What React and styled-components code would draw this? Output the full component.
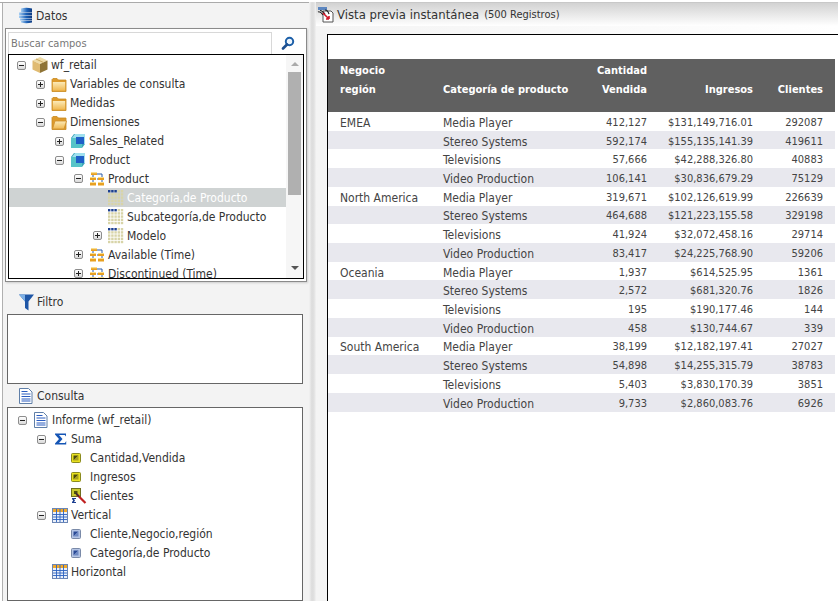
import React from 'react';
import styled, { createGlobalStyle } from 'styled-components';

const GlobalStyle = createGlobalStyle`
  html, body { margin: 0; padding: 0; background: #fff; }
  body { font-family: "DejaVu Sans Condensed", "DejaVu Sans", "Noto Sans", sans-serif; font-stretch: condensed; font-size: 12px; color: #333; }
`;

const Page = styled.div`
  width: 838px;
  height: 601px;
  display: flex;
  overflow: hidden;
  background: #fff;
`;

const LeftPane = styled.div`
  width: 309px;
  height: 601px;
  box-sizing: border-box;
  padding: 0 0 0 5px;
  margin-top: 2px;
  background: #f3f3f3;
  border-top: 1px solid #aaa;
  box-shadow: inset 2px 0 0 #fff, inset 3px 0 0 #b0b0b0;
  display: flex;
  flex-direction: column;
`;

const Splitter = styled.div`
  width: 7px;
  margin-top: 2px;
  background: linear-gradient(to right, #f3f3f3, #dcdcdc 40%, #e0e0e0 70%, #f2f2f2);
`;

const RightPane = styled.div`
  flex: 1;
  min-width: 0;
  display: flex;
  flex-direction: column;
`;

const PaneTitle = styled.div`
  height: ${p => p.$h}px;
  display: flex;
  align-items: center;
  gap: ${p => p.$gap || 4}px;
  padding: ${p => p.$top || 0}px 0 0 ${p => p.$left}px;
  font-size: 12px;
  color: #333;
  box-sizing: border-box;
`;

const DataFrame = styled.div`
  width: 302px;
  height: 254px;
  box-sizing: border-box;
  padding: 2px;
  background: #fff;
  border: 1px solid #8a8a8a;
  box-shadow: 1px 1px 2px #ccc;
`;

const SearchBar = styled.div`
  height: 23px;
  display: flex;
  align-items: center;
`;

const SearchField = styled.div`
  width: 264px;
  height: 22px;
  box-sizing: border-box;
  border: 1px solid #d8d8d8;
  border-bottom: none;
  padding-left: 2px;
  line-height: 22px;
  font-size: 11px;
  color: #777;
`;

const SearchButton = styled.div`
  flex: 1;
  display: flex;
  justify-content: center;
`;

const TreeBox = styled.div`
  width: 296px;
  height: 225px;
  box-sizing: border-box;
  border: 1px solid #000;
  display: flex;
  overflow: hidden;
`;

const TreeList = styled.div`
  flex: 1;
  min-width: 0;
  overflow: hidden;
  padding-top: 1px;
`;

const Row = styled.div`
  height: 18.93px;
  display: flex;
  align-items: center;
  white-space: nowrap;
  padding-left: ${p => p.$pad + p.$level * 19}px;
  background: ${p => (p.$selected ? '#cfd3d3' : 'transparent')};
  color: ${p => (p.$selected ? '#fff' : '#333')};
`;

const Toggle = styled.span`
  width: 9px;
  height: 9px;
  flex: none;
  box-sizing: border-box;
  margin-right: 6px;
  border: 1px solid #8d8d8d;
  border-radius: 2px;
  background: linear-gradient(#fff, #d9d9d9);
  position: relative;
  visibility: ${p => (p.$kind ? 'visible' : 'hidden')};
  &::before {
    content: '';
    position: absolute;
    left: 1px;
    top: 3px;
    width: 5px;
    height: 1px;
    background: #222;
  }
  &::after {
    content: '';
    position: absolute;
    left: 3px;
    top: 1px;
    width: 1px;
    height: 5px;
    background: #222;
    display: ${p => (p.$kind === 'plus' ? 'block' : 'none')};
  }
`;

const IconSlot = styled.span`
  width: 16px;
  height: 16px;
  flex: none;
  margin-right: 3px;
  display: flex;
  align-items: center;
  justify-content: center;
`;

const Scrollbar = styled.div`
  width: 17px;
  flex: none;
  background: #f6f6f6;
  display: flex;
  flex-direction: column;
  align-items: center;
`;

const ScrollArrow = styled.div`
  width: 0;
  height: 0;
  margin: ${p => p.$margin};
  border-left: 4px solid transparent;
  border-right: 4px solid transparent;
  ${p => (p.$up ? 'border-bottom: 4px solid #aaa;' : 'border-top: 4px solid #555;')}
`;

const ScrollThumb = styled.div`
  width: 13px;
  height: 123px;
  margin-top: 6px;
  background: #b0b0b0;
`;

const ScrollGap = styled.div`
  flex: 1;
`;

const QueryBox = styled.div`
  width: 296px;
  height: ${p => p.$h}px;
  box-sizing: border-box;
  margin-left: 2px;
  background: #fff;
  border: 1px solid #666;
  padding-top: ${p => p.$top || 0}px;
`;

const PreviewHeader = styled.div`
  height: 24px;
  margin-top: 2px;
  border-top: 1px solid #c8c8c8;
  box-sizing: border-box;
  background: linear-gradient(#d2d2d2, #fff);
  display: flex;
  align-items: center;
  gap: 3px;
  padding-left: 1px;
  font-size: 13px;
  color: #333;
`;

const RecordCount = styled.span`
  font-size: 11px;
  margin-left: 2px;
`;

const PreviewBody = styled.div`
  flex: 1;
  padding: 8px 0 0 11px;
  background: linear-gradient(to right, #f4f4f4, #fff);
`;

const PreviewSheet = styled.div`
  height: 100%;
  box-sizing: border-box;
  background: #fff;
  border-left: 1px solid #000;
  border-top: 1px solid #000;
  padding-top: 24px;
`;

const ReportTable = styled.table`
  width: 507px;
  table-layout: fixed;
  border-collapse: collapse;
  font-size: 12px;
  color: #444;
`;

const HeadCell = styled.th`
  height: 53px;
  box-sizing: border-box;
  background: #606060;
  color: #fff;
  font-size: 11px;
  font-weight: bold;
  line-height: 19px;
  vertical-align: bottom;
  padding: 0 ${p => (p.$right ? '12px' : '0')} 13px ${p => (p.$right ? '0' : '12px')};
  text-align: ${p => (p.$right ? 'right' : 'left')};
`;

const BodyRow = styled.tr`
  height: 18.73px;
  background: ${p => (p.$striped ? '#e8e8ee' : '#fff')};
`;

const BodyCell = styled.td`
  padding: 3px ${p => (p.$right ? '12px' : '0')} 0 ${p => (p.$right ? '0' : '12px')};
  font-size: ${p => (p.$right ? '11px' : '12px')};
  line-height: 14px;
  text-align: ${p => (p.$right ? 'right' : 'left')};
  white-space: nowrap;
`;

const DatabaseIcon = () => (
  <svg width="15" height="17" viewBox="0 0 15 17">
    <defs>
      <linearGradient id="dbg" x1="0" x2="1">
        <stop offset="0" stopColor="#a8d0f4" />
        <stop offset="0.55" stopColor="#1d62b8" />
        <stop offset="1" stopColor="#0d3a80" />
      </linearGradient>
    </defs>
    <path d="M3 1.500Q8 0 14 1.500V5H3z" fill="url(#dbg)" />
    <path d="M1 5.500H14V8H1z" fill="url(#dbg)" />
    <path d="M1 8.500H14V11H1z" fill="url(#dbg)" />
    <path d="M2 11.500H14V13.500H2z" fill="url(#dbg)" />
    <path d="M3 14H14V15.500Q8 17 3 15.500z" fill="url(#dbg)" />
  </svg>
);

const SearchIcon = () => (
  <svg width="14" height="14" viewBox="0 0 14 14">
    <circle cx="8.500" cy="5.500" r="3.700" fill="#eef5fc" stroke="#1c5fa8" strokeWidth="2" />
    <path d="M6 8.500 2 12.500" stroke="#1c4f90" strokeWidth="2.600" strokeLinecap="round" />
  </svg>
);

const BoxIcon = () => (
  <svg width="16" height="16" viewBox="0 0 16 16">
    <path d="M8 0 15.500 3.500 8 7 0.500 3.500z" fill="#efdca8" />
    <path d="M0.500 3.500 8 7v9L0.500 12.500z" fill="#e0bb72" />
    <path d="M15.500 3.500 8 7v9l7.500-3.500z" fill="#8f7436" />
    <path d="M4 2 11.500 5.500" stroke="#c9a860" strokeWidth="1" />
  </svg>
);

const FolderIcon = ({ open }) => (
  <svg width="16" height="15" viewBox="0 0 16 15">
    <defs>
      <linearGradient id="fold" x1="0" x2="0" y1="0" y2="1">
        <stop offset="0" stopColor="#fbeab8" />
        <stop offset="1" stopColor="#f0b850" />
      </linearGradient>
    </defs>
    <path d="M1 2.500 2 1.500h4l1.500 1.500H15v11.500H1z" fill="#dd9a2c" stroke="#c98a20" strokeWidth="0.800" />
    {open
      ? <path d="M4 6h11.500L13 14H1.500z" fill="url(#fold)" stroke="#cf8f2c" strokeWidth="0.800" />
      : <path d="M1.800 5h12.400V13.700H1.800z" fill="url(#fold)" />}
  </svg>
);

const CubeIcon = () => (
  <svg width="16" height="16" viewBox="0 0 16 16">
    <path d="M4 1h11v10l-3 4H1V5z" fill="#3aa3b8" />
    <path d="M1 5h11v10H1z" fill="#57c4c8" />
    <path d="M5 1h10v10h-3V5H2z" fill="#9fe0ee" />
    <path d="M6 4h8v7H6z" fill="#1f5fc8" />
  </svg>
);

const HierarchyIcon = () => (
  <svg width="16" height="16" viewBox="0 0 16 16">
    <path d="M4 3v10h3M4 7.500h3M8 3h5v3M8 8h5v3" stroke="#2a5aa8" strokeWidth="1" fill="none" />
    <path d="M2 1h6v3H2zM1 6h6v3H1zM9 6h6v3H9zM1 11h6v3.500H1zM9 11h6v3.500H9z" fill="#e8a020" />
    <path d="M2 1h6v1.200H2zM1 6h6v1H1zM9 6h6v1H9zM1 11h6v1H1zM9 11h6v1H9z" fill="#f9dd90" />
  </svg>
);

const GridCell = styled.rect``;

const DimensionIcon = () => {
  const cells = [];
  for (let r = 0; r < 5; r++) {
    for (let c = 0; c < 5; c++) {
      const dark = r === 0 && c < 3;
      cells.push(<GridCell key={`${r}-${c}`} x={c * 3.2} y={r * 3.2} width="2.400" height="2.400" fill={dark ? '#1c3f90' : '#d8d4a8'} />);
    }
  }
  return <svg width="16" height="16" viewBox="0 0 16 16">{cells}</svg>;
};

const FunnelIcon = () => (
  <svg width="15" height="17" viewBox="0 0 15 17">
    <path d="M0 0.500h15L9.500 7.500V16.500L6 14V7.500z" fill="#1e56a6" />
    <path d="M0 0.500h6L6 7.500z" fill="#7db0e6" />
  </svg>
);

const ReportIcon = () => (
  <svg width="14" height="16" viewBox="0 0 14 16">
    <path d="M0.500 0.500h9l3.500 3.500v11.500H0.500z" fill="#fff" stroke="#5f7fa8" />
    <path d="M2.500 3.500h6M2.500 6h9M2.500 8.500h9M2.500 11h9M2.500 13h9" stroke="#2a5cc0" strokeWidth="1.200" />
  </svg>
);

const SigmaIcon = () => (
  <svg width="13" height="12" viewBox="0 0 13 12">
    <path d="M1 0.500h11v3l-1.200-1.500H5l3.500 4-3.500 4h6l1.200-2v3.500H1v-1l4-4.500-4-4.500z" fill="#1555b5" />
  </svg>
);

const MeasureDot = () => (
  <svg width="16" height="10" viewBox="0 0 16 10">
    <rect x="0.500" y="0.500" width="9" height="9" rx="1" fill="#e8e020" stroke="#8a8a20" />
    <path d="M2.500 7.500V2.500h5z" fill="#4a4a10" />
    <path d="M7.500 2.500v5h-5z" fill="#a8a020" />
  </svg>
);

const BlueDot = () => (
  <svg width="16" height="10" viewBox="0 0 16 10">
    <rect x="0.500" y="0.500" width="9" height="9" rx="1" fill="#b4c4e4" stroke="#7a8aa8" />
    <path d="M2.500 7.500V2.500h5z" fill="#2a4a96" />
    <path d="M7.500 2.500v5h-5z" fill="#6f8ac4" />
  </svg>
);

const ComputedIcon = () => (
  <svg width="16" height="16" viewBox="0 0 16 16">
    <rect x="0.500" y="0.500" width="9" height="8" fill="#c8c830" stroke="#707020" />
    <path d="M3 3h3.500v3H3z" fill="#505010" />
    <path d="M5.500 6 14.500 15" stroke="#c02020" strokeWidth="2.200" />
    <path d="M4.500 5 8 8.500" stroke="#333" strokeWidth="1.400" />
    <path d="M1 10h4v1H3l1 1.500L3 14h2v1H1v-1l1.200-1.500L1 11z" fill="#1c3f90" />
  </svg>
);

const TableIcon = () => (
  <svg width="16" height="15" viewBox="0 0 16 15">
    <rect x="0.500" y="0.500" width="15" height="14" fill="#eaf0fa" stroke="#6b86b5" />
    <rect x="1" y="1" width="14" height="3" fill="#f0a82a" />
    <path d="M1 6.500h14M1 9h14M1 11.500h14M4.500 1v13M8 1v13M11.500 1v13" stroke="#2d62c0" strokeWidth="0.900" />
  </svg>
);

const PreviewIcon = () => (
  <svg width="17" height="17" viewBox="0 0 17 17">
    <path d="M1 1h9v3H1z" fill="#5c86c0" />
    <path d="M6 5h8l2 2v9H6z" fill="#fff" stroke="#555" />
    <path d="M1 6c2-1 3 0 5 3M3 4.500c2 0 3 1 5 3.500M8 4c2 0 3 1 4 4" stroke="#222" strokeWidth="1.200" fill="none" />
    <path d="M6 7l6 6M12 13v-3M12 13H9" stroke="#d01828" strokeWidth="1.600" fill="none" />
  </svg>
);

const fieldRows = [
  { level: 0, toggle: 'minus', icon: <BoxIcon />, label: 'wf_retail' },
  { level: 1, toggle: 'plus', icon: <FolderIcon />, label: 'Variables de consulta' },
  { level: 1, toggle: 'plus', icon: <FolderIcon />, label: 'Medidas' },
  { level: 1, toggle: 'minus', icon: <FolderIcon open />, label: 'Dimensiones' },
  { level: 2, toggle: 'plus', icon: <CubeIcon />, label: 'Sales_Related' },
  { level: 2, toggle: 'minus', icon: <CubeIcon />, label: 'Product' },
  { level: 3, toggle: 'minus', icon: <HierarchyIcon />, label: 'Product' },
  { level: 4, icon: <DimensionIcon />, label: 'Categoría,de Producto', selected: true },
  { level: 4, icon: <DimensionIcon />, label: 'Subcategoría,de Producto' },
  { level: 4, toggle: 'plus', icon: <DimensionIcon />, label: 'Modelo' },
  { level: 3, toggle: 'plus', icon: <HierarchyIcon />, label: 'Available (Time)' },
  { level: 3, toggle: 'plus', icon: <HierarchyIcon />, label: 'Discontinued (Time)' },
];

const queryRows = [
  { level: 0, toggle: 'minus', icon: <ReportIcon />, label: 'Informe (wf_retail)' },
  { level: 1, toggle: 'minus', icon: <SigmaIcon />, label: 'Suma' },
  { level: 2, icon: <MeasureDot />, label: 'Cantidad,Vendida' },
  { level: 2, icon: <MeasureDot />, label: 'Ingresos' },
  { level: 2, icon: <ComputedIcon />, label: 'Clientes' },
  { level: 1, toggle: 'minus', icon: <TableIcon />, label: 'Vertical' },
  { level: 2, icon: <BlueDot />, label: 'Cliente,Negocio,región' },
  { level: 2, icon: <BlueDot />, label: 'Categoría,de Producto' },
  { level: 1, icon: <TableIcon />, label: 'Horizontal' },
];

const reportRows = [
  ['EMEA', 'Media Player', '412,127', '$131,149,716.01', '292087'],
  ['', 'Stereo Systems', '592,174', '$155,135,141.39', '419611'],
  ['', 'Televisions', '57,666', '$42,288,326.80', '40883'],
  ['', 'Video Production', '106,141', '$30,836,679.29', '75129'],
  ['North America', 'Media Player', '319,671', '$102,126,619.99', '226639'],
  ['', 'Stereo Systems', '464,688', '$121,223,155.58', '329198'],
  ['', 'Televisions', '41,924', '$32,072,458.16', '29714'],
  ['', 'Video Production', '83,417', '$24,225,768.90', '59206'],
  ['Oceania', 'Media Player', '1,937', '$614,525.95', '1361'],
  ['', 'Stereo Systems', '2,572', '$681,320.76', '1826'],
  ['', 'Televisions', '195', '$190,177.46', '144'],
  ['', 'Video Production', '458', '$130,744.67', '339'],
  ['South America', 'Media Player', '38,199', '$12,182,197.41', '27027'],
  ['', 'Stereo Systems', '54,898', '$14,255,315.79', '38783'],
  ['', 'Televisions', '5,403', '$3,830,170.39', '3851'],
  ['', 'Video Production', '9,733', '$2,860,083.76', '6926'],
];

const TreeRows = ({ rows, pad }) =>
  rows.map((row, i) => (
    <Row key={i} $level={row.level} $pad={pad} $selected={row.selected}>
      <Toggle $kind={row.toggle} />
      <IconSlot>{row.icon}</IconSlot>
      {row.label}
    </Row>
  ));

export default function App() {
  return (
    <Page>
      <GlobalStyle />
      <LeftPane>
        <PaneTitle $h={25} $left={13} $gap={3}>
          <DatabaseIcon />
          Datos
        </PaneTitle>
        <DataFrame>
          <SearchBar>
            <SearchField>Buscar campos</SearchField>
            <SearchButton><SearchIcon /></SearchButton>
          </SearchBar>
          <TreeBox>
            <TreeList>
              <TreeRows rows={fieldRows} pad={8} />
            </TreeList>
            <Scrollbar>
              <ScrollArrow $up $margin="7px 0 0" />
              <ScrollThumb />
              <ScrollGap />
              <ScrollArrow $margin="0 0 8px" />
            </Scrollbar>
          </TreeBox>
        </DataFrame>
        <PaneTitle $h={32} $top={8} $left={14} $gap={3}>
          <FunnelIcon />
          Filtro
        </PaneTitle>
        <QueryBox $h={70} />
        <PaneTitle $h={23} $left={14} $gap={4}>
          <ReportIcon />
          Consulta
        </PaneTitle>
        <QueryBox $h={194} $top={3}>
          <TreeRows rows={queryRows} pad={10} />
        </QueryBox>
      </LeftPane>
      <Splitter />
      <RightPane>
        <PreviewHeader>
          <PreviewIcon />
          Vista previa instantánea
          <RecordCount>(500 Registros)</RecordCount>
        </PreviewHeader>
        <PreviewBody>
          <PreviewSheet>
            <ReportTable>
              <colgroup>
                <col width="103" />
                <col width="159" />
                <col width="69" />
                <col width="106" />
                <col width="70" />
              </colgroup>
              <thead>
                <tr>
                  <HeadCell>Negocio<br />región</HeadCell>
                  <HeadCell>Categoría de producto</HeadCell>
                  <HeadCell $right>Cantidad<br />Vendida</HeadCell>
                  <HeadCell $right>Ingresos</HeadCell>
                  <HeadCell $right>Clientes</HeadCell>
                </tr>
              </thead>
              <tbody>
                {reportRows.map((row, i) => (
                  <BodyRow key={i} $striped={i % 2 === 1}>
                    <BodyCell>{row[0]}</BodyCell>
                    <BodyCell>{row[1]}</BodyCell>
                    <BodyCell $right>{row[2]}</BodyCell>
                    <BodyCell $right>{row[3]}</BodyCell>
                    <BodyCell $right>{row[4]}</BodyCell>
                  </BodyRow>
                ))}
              </tbody>
            </ReportTable>
          </PreviewSheet>
        </PreviewBody>
      </RightPane>
    </Page>
  );
}
